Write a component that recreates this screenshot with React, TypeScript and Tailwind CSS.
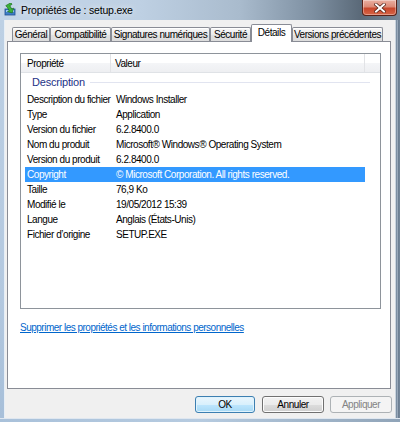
import React from 'react'

const TABS = [
  { label: 'Général', w: 'w-[38px]' },
  { label: 'Compatibilité', w: 'w-[61px]' },
  { label: 'Signatures numériques', w: 'w-[99px]' },
  { label: 'Sécurité', w: 'w-[41px]' },
  { label: 'Détails', w: 'w-[41px]', active: true },
  { label: 'Versions précédentes', w: 'w-[91px]' },
]

const ROWS: [string, string][] = [
  ['Description du fichier', 'Windows Installer'],
  ['Type', 'Application'],
  ['Version du fichier', '6.2.8400.0'],
  ['Nom du produit', 'Microsoft® Windows® Operating System'],
  ['Version du produit', '6.2.8400.0'],
  ['Copyright', '© Microsoft Corporation. All rights reserved.'],
  ['Taille', '76,9 Ko'],
  ['Modifié le', '19/05/2012 15:39'],
  ['Langue', 'Anglais (États-Unis)'],
  ['Fichier d’origine', 'SETUP.EXE'],
]

function SetupIcon() {
  return (
    <svg width="13" height="13" viewBox="0 0 13 13">
      <rect x="1" y="6" width="10" height="6" fill="#3f7fc8" stroke="#1f4f8f" strokeWidth="0.8" />
      <rect x="2" y="7" width="8" height="2" fill="#9cc8f0" />
      <path d="M4 1 L10 1 L10 3 L7.5 3 L7.5 7 L9.5 7 L6 10.5 L2.5 7 L4.5 7 L4.5 3 Z" fill="#3cb43c" stroke="#1d6b1d" strokeWidth="0.6" transform="rotate(-30 6 6)" />
    </svg>
  )
}

function CloseButton() {
  return (
    <div className="w-[35px] h-[16px] mr-[3px] rounded-b-[4px] border border-t-0 border-[#5a2218] bg-[linear-gradient(to_bottom,#eab0a2_0%,#dc8a76_45%,#c8472c_55%,#d66446_100%)] flex items-center justify-center shadow-[inset_0_0_0_1px_rgba(255,255,255,0.35)]">
      <svg width="12" height="10" viewBox="0 0 12 10">
        <path d="M2 1.5 L10 8.5 M10 1.5 L2 8.5" stroke="#4a1a10" strokeWidth="3.4" strokeLinecap="square" />
        <path d="M2 1.5 L10 8.5 M10 1.5 L2 8.5" stroke="#ffffff" strokeWidth="2" strokeLinecap="square" />
      </svg>
    </div>
  )
}

export default function App() {
  return (
    <div className="w-[400px] h-[422px] flex flex-col overflow-hidden bg-[#b7cbe0] font-['Liberation_Sans',Arial,sans-serif] text-black">
      {/* Title bar */}
      <div className="h-[20px] shrink-0 flex items-start bg-[linear-gradient(to_right,#c3d5e8_0%,#bed0e3_35%,#a9bbcd_60%,#7e90a2_78%,#5b6a79_90%,#7a8a9a_100%)]">
        <div className="ml-[4px] mt-[3px]">
          <SetupIcon />
        </div>
        <span className="ml-[4px] mt-[4px] text-[10.5px] leading-[12px] tracking-[-0.2px] [text-shadow:0_0_6px_rgba(255,255,255,0.9)]">
          Propriétés de : setup.exe
        </span>
        <div className="flex-1" />
        <CloseButton />
      </div>

      <div className="flex flex-1 min-h-0">
        {/* Left frame */}
        <div className="w-[5px] shrink-0 bg-[linear-gradient(to_bottom,#bdd0e4,#b3c8df_70%,#a7bfd9)] border-r border-[#e6eef6]" />

        {/* Dialog body */}
        <div className="flex-1 min-w-0 bg-[#f0f0f0] flex flex-col text-[10px] tracking-[-0.45px]">
          {/* Tabs */}
          <div className="h-[21px] shrink-0 flex items-end pl-[7px]">
            {TABS.map((t) =>
              t.active ? (
                <div
                  key={t.label}
                  className={`${t.w} h-[18px] -mb-px relative z-10 flex items-center justify-center pb-[2px] bg-white border border-b-0 border-[#898c95] rounded-t-[2px]`}
                >
                  {t.label}
                </div>
              ) : (
                <div
                  key={t.label}
                  className={`${t.w} h-[14px] flex items-center justify-center whitespace-nowrap bg-[linear-gradient(to_bottom,#f7f7f7_0%,#ececec_50%,#e2e2e2_51%,#dcdcdc_100%)] border border-b-0 border-[#898c95] rounded-t-[2px] shadow-[inset_0_1px_0_#ffffff]`}
                >
                  {t.label}
                </div>
              ),
            )}
          </div>

          {/* Tab panel */}
          <div className="ml-[2px] mr-[4px] h-[348px] shrink-0 bg-white border border-[#898c95] flex flex-col pt-[11px] pl-[12px] pr-[9px]">
            {/* List view */}
            <div className="h-[256px] shrink-0 border border-[#8e949b] bg-white flex flex-col">
              <div className="h-[19px] shrink-0 flex border-b border-[#dfe2e6] bg-[linear-gradient(to_bottom,#ffffff_0%,#ffffff_50%,#f4f5f7_51%,#eeeff2_100%)]">
                <div className="w-[90px] pl-[6px] flex items-center border-r border-[#e2e3e6]">Propriété</div>
                <div className="w-[254px] pl-[4px] flex items-center border-r border-[#e2e3e6]">Valeur</div>
                <div className="flex-1" />
              </div>

              <div className="h-[19px] shrink-0 flex items-center pl-[11px]">
                <span className="text-[#1e3287] text-[11px] tracking-[-0.2px]">Description</span>
                <div className="flex-1 h-px ml-[5px] mr-[10px] bg-[#e1e4f0]" />
              </div>

              {ROWS.map(([k, v]) => {
                const sel = k === 'Copyright'
                return (
                  <div
                    key={k}
                    className={`h-[15px] shrink-0 ml-[4px] w-[340px] flex items-center ${
                      sel ? 'bg-[#3399ff] text-white' : ''
                    }`}
                  >
                    <span className="w-[91px] shrink-0 pl-[2px] whitespace-nowrap">{k}</span>
                    <span className="whitespace-nowrap">{v}</span>
                  </div>
                )
              })}
            </div>

            <a className="mt-[13px] text-[#0066cc] underline whitespace-nowrap leading-[12px] tracking-[-0.5px] cursor-pointer">
              Supprimer les propriétés et les informations personnelles
            </a>
          </div>

          {/* Buttons */}
          <div className="mt-[7px] pr-[3px] flex justify-end">
            <button className="w-[60px] h-[17px] rounded-[3px] border border-[#3c7fb1] bg-[linear-gradient(to_bottom,#eaf6fd_0%,#d9f0fc_50%,#bee6fd_51%,#a7d9f5_100%)] shadow-[inset_0_0_0_1px_#dff3fd] text-[10px]">
              OK
            </button>
            <button className="ml-[7px] w-[62px] h-[17px] rounded-[3px] border border-[#707070] bg-[linear-gradient(to_bottom,#f2f2f2_0%,#ebebeb_50%,#dddddd_51%,#cfcfcf_100%)] shadow-[inset_0_0_0_1px_#fcfcfc] text-[10px]">
              Annuler
            </button>
            <button className="ml-[6px] w-[62px] h-[17px] rounded-[3px] border border-[#adb2b5] bg-[#f4f4f4] text-[#838383] text-[10px]">
              Appliquer
            </button>
          </div>
        </div>

        {/* Right frame */}
        <div className="w-[5px] shrink-0 border-l border-[#c9d3dd] bg-[linear-gradient(to_right,#6f8397,#9aaabb_40%,#5e7185_70%,#8193a5)]" />
      </div>

      {/* Bottom frame */}
      <div className="h-[4px] shrink-0 bg-[linear-gradient(to_right,#a9c1da,#b6cbe0_50%,#90a4b8)] border-t border-[#dfe7f0]" />
    </div>
  )
}
